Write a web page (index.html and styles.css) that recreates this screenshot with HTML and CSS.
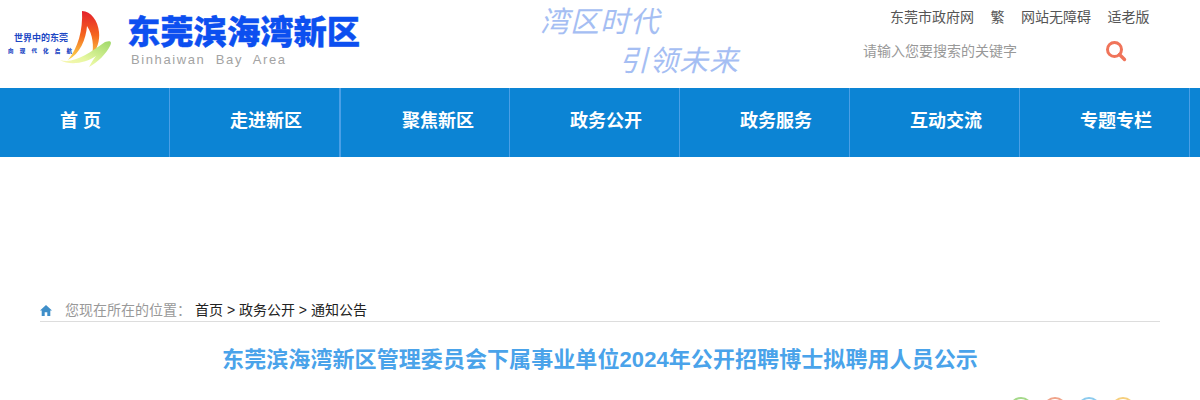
FILE: index.html
```html
<!DOCTYPE html>
<html lang="zh-CN">
<head>
<meta charset="utf-8">
<title>东莞滨海湾新区</title>
<link rel="stylesheet" href="styles.css">
</head>
<body>
<header class="header">
  <div class="emblem">
    <div class="emblem-text">
      <div class="emblem-main">世界中的东莞</div>
      <div class="emblem-sub">向现代化启航</div>
    </div>
    <svg class="sail" width="54" height="60" viewBox="0 0 54 60">
      <defs>
        <linearGradient id="red" x1="0" y1="0" x2="0" y2="1">
          <stop offset="0" stop-color="#e4202c"/>
          <stop offset=".5" stop-color="#f5661e"/>
          <stop offset="1" stop-color="#fbdc50"/>
        </linearGradient>
        <linearGradient id="green" x1="1" y1="0" x2="0" y2="1">
          <stop offset="0" stop-color="#9ed868"/>
          <stop offset=".6" stop-color="#e6f7a0"/>
          <stop offset="1" stop-color="#fdf6b8"/>
        </linearGradient>
      </defs>
      <path d="M22 1 C31 1 38 11 39 22 C40 31 37 39 32 46 C34 36 33 25 27 16 C26 29 20 44 8 50 C18 38 23 20 22 1Z" fill="url(#red)"/>
      <path d="M0 50 C14 54 28 44 45 32 C51 30 52 32 50 36 C46 44 38 52 29 57 C31 53 33 50 36 46 C26 53 10 56 0 50Z" fill="url(#green)"/>
    </svg>
  </div>
  <div class="brand">
    <div class="brand-cn">东莞滨海湾新区</div>
    <div class="brand-en">Binhaiwan&nbsp; Bay&nbsp; Area</div>
  </div>
  <div class="slogan">
    <div class="slogan-a">湾区时代</div>
    <div class="slogan-b">引领未来</div>
  </div>
  <div class="tools">
    <nav class="tool-links">
      <a>东莞市政府网</a><a>繁</a><a>网站无障碍</a><a>适老版</a>
    </nav>
    <div class="search">
      <span class="search-hint">请输入您要搜索的关键字</span>
      <svg class="search-icon" width="22" height="22" viewBox="0 0 22 22">
        <circle cx="9.5" cy="9.5" r="7" fill="none" stroke="#f0745a" stroke-width="3"/>
        <path d="M14.5 14.5 L19.5 19.5" stroke="#f0745a" stroke-width="3.4" stroke-linecap="round"/>
      </svg>
    </div>
  </div>
</header>
<nav class="nav">
  <a class="nav-item">首 页</a>
  <a class="nav-item nav-item-wide">走进新区</a>
  <a class="nav-item nav-item-after">聚焦新区</a>
  <a class="nav-item">政务公开</a>
  <a class="nav-item">政务服务</a>
  <a class="nav-item">互动交流</a>
  <a class="nav-item">专题专栏</a>
</nav>
<main class="main">
  <div class="crumbs">
    <svg class="home" width="12" height="11" viewBox="0 0 12 11">
      <path d="M6 0 L12 5.6 H10.3 V11 H7.3 V7.2 H4.7 V11 H1.7 V5.6 H0Z" fill="#3f8fc9"/>
    </svg>
    <span class="crumbs-label">您现在所在的位置：</span>
    <span class="crumbs-path">首页 &gt; 政务公开 &gt; 通知公告</span>
  </div>
  <h1 class="title">东莞滨海湾新区管理委员会下属事业单位2024年公开招聘博士拟聘用人员公示</h1>
  <div class="share">
    <span class="dot dot-green"></span>
    <span class="dot dot-orange"></span>
    <span class="dot dot-blue"></span>
    <span class="dot dot-yellow"></span>
  </div>
</main>
</body>
</html>
```
FILE: styles.css
```css
* { box-sizing: border-box; }
html, body { margin: 0; padding: 0; }
body {
  background: #fff;
  font-family: "Liberation Sans", "Noto Sans CJK SC", sans-serif;
  overflow: hidden;
  height: 400px;
}
.header { display: flex; height: 88px; }
.emblem { display: flex; width: 128px; padding: 10px 0 0 8px; }
.emblem-text { width: 66px; padding-top: 22px; text-align: center; }
.emblem-main { font-size: 9px; line-height: 13px; font-weight: 700; color: #1c47c4; white-space: nowrap; }
.emblem-sub { font-size: 5.5px; line-height: 7px; font-weight: 900; color: #1c47c4; letter-spacing: 6.2px; margin-top: 3px; white-space: nowrap; }
.sail { flex: none; margin-left: -14px; }
.brand { width: 376px; padding-top: 14px; }
.brand-cn { font-size: 33.3px; line-height: 38px; font-weight: 900; color: #0c4ff0; white-space: nowrap; -webkit-text-stroke: .4px #0c4ff0; margin-left: -1px; }
.brand-en { font-size: 13px; line-height: 15px; color: #a3a3a3; letter-spacing: 1.6px; padding-left: 3px; white-space: nowrap; }
.slogan { width: 359px; padding: 5px 0 0 36px; color: #a5bef3; font-weight: 400; font-size: 29px; line-height: 34px; font-style: italic; }
.slogan-a { white-space: nowrap; letter-spacing: 1px; }
.slogan-b { white-space: nowrap; letter-spacing: 1px; padding-left: 79px; margin-top: 5px; }
.tools { flex: 1; }
.tool-links { display: flex; gap: 16.5px; padding: 9px 0 0 27px; font-size: 14px; line-height: 16px; color: #555; white-space: nowrap; }
.search { display: flex; align-items: center; padding: 15px 0 0; }
.search-hint { width: 242px; font-size: 14px; line-height: 22px; color: #999; white-space: nowrap; }
.search-icon { flex: none; }
.nav { display: flex; height: 69px; background: #0c84d4; }
.nav-item {
  width: 170px;
  padding-left: 60px;
  border-right: 1px solid #4a9fe6;
  color: #fff;
  font-size: 18px;
  font-weight: 700;
  line-height: 66px;
  white-space: nowrap;
}
.nav-item-wide { width: 171px; border-right-width: 2px; }
.nav-item-after { width: 169px; padding-left: 61px; }
.main { padding: 143px 40px 0; }
.crumbs { display: flex; align-items: center; height: 22px; padding-bottom: 2px; border-bottom: 1px solid #ddd; font-size: 14px; line-height: 20px; white-space: nowrap; }
.home { flex: none; margin-right: 13px; margin-top: 2px; }
.crumbs-label { color: #999; width: 130px; }
.crumbs-path { color: #222; }
.title { margin: 23px 0 0; text-align: center; font-size: 22px; line-height: 30px; font-weight: 700; color: #4aa3ea; letter-spacing: .08px; }
.share { display: flex; justify-content: flex-end; gap: 10px; padding-right: 25px; margin-top: 22px; }
.dot { width: 24px; height: 24px; border-radius: 50%; border: 2px solid; }
.dot-green { border-color: #a5d98a; }
.dot-orange { border-color: #f0a48a; }
.dot-blue { border-color: #8ccbee; }
.dot-yellow { border-color: #f6cf7d; }
```
